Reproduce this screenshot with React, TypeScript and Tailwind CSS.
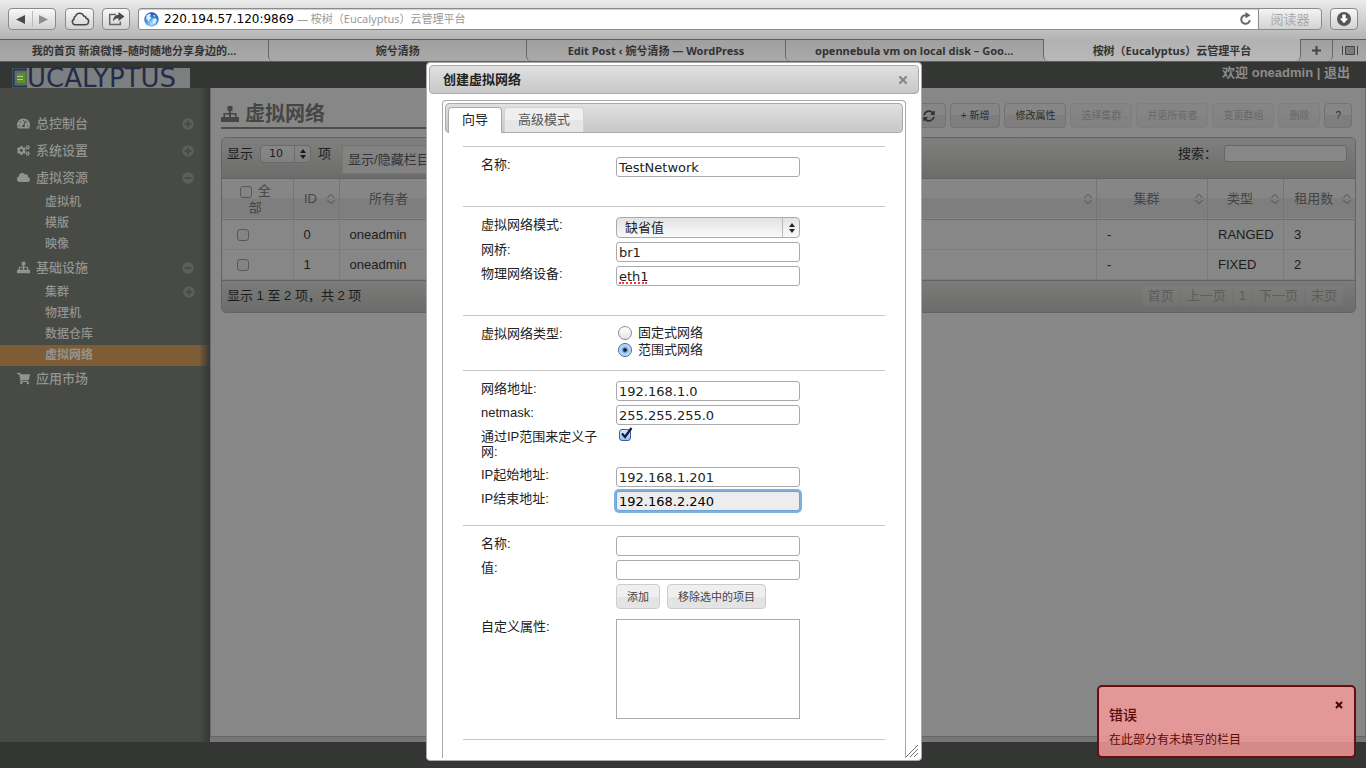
import type { ReactNode } from "react";
import { FaCloud, FaCogs, FaMinusCircle, FaPlusCircle, FaShoppingCart, FaSyncAlt, FaTachometerAlt, FaTimes } from "react-icons/fa";

const ui = "font-['Liberation_Sans','Noto_Sans_CJK_SC',sans-serif]";
const chrome = "font-['Noto_Sans','Noto_Sans_CJK_SC',sans-serif]";
const verdana = "font-['DejaVu_Sans','Noto_Sans_CJK_SC',sans-serif]";

function Sitemap({ className }: { className?: string }) {
  return (
    <svg viewBox="0 0 18 16" className={className} fill="currentColor">
      <path d="M6.500 0h5v5H10v2h5.500v4H18v5h-6v-5h2V8.500h-4V11h2v5H6v-5h2V8.500H4V11h2v5H0v-5h2.500V7H8V5H6.500z" />
    </svg>
  );
}

const navigation = [
  { label: "总控制台", icon: FaTachometerAlt, toggle: "plus", items: [] },
  { label: "系统设置", icon: FaCogs, toggle: "plus", items: [] },
  {
    label: "虚拟资源",
    icon: FaCloud,
    toggle: "minus",
    items: [{ label: "虚拟机" }, { label: "模版" }, { label: "映像" }],
  },
  {
    label: "基础设施",
    icon: Sitemap,
    toggle: "minus",
    items: [
      { label: "集群", expandable: true },
      { label: "物理机" },
      { label: "数据仓库" },
      { label: "虚拟网络", active: true },
    ],
  },
  { label: "应用市场", icon: FaShoppingCart, toggle: "", items: [] },
];

const tabs = [
  "我的首页 新浪微博–随时随地分享身边的…",
  "婉兮清扬",
  "Edit Post ‹ 婉兮清扬 — WordPress",
  "opennebula vm on local disk – Goo…",
];

const actions = [
  { label: "+ 新增", disabled: false },
  { label: "修改属性", disabled: false },
  { label: "选择集群", disabled: true },
  { label: "并更所有者", disabled: true },
  { label: "变更群组", disabled: true },
  { label: "删除", disabled: true },
  { label: "?", disabled: false },
];

const networks = [
  { id: 0, owner: "oneadmin", cluster: "-", type: "RANGED", leases: 3 },
  { id: 1, owner: "oneadmin", cluster: "-", type: "FIXED", leases: 2 },
];

const pages = ["首页", "上一页", "1", "下一页", "末页"];

function ToolButton({ label, className, children }: { label: string; className: string; children: ReactNode }) {
  return (
    <button
      aria-label={label}
      className={`flex h-[22px] items-center justify-center rounded-[4px] border border-[#8a8a8a] bg-linear-to-b from-[#f8f8f8] to-[#d2d2d2] ${className}`}
    >
      {children}
    </button>
  );
}

function BrowserBar() {
  return (
    <div className={`shrink-0 ${chrome}`}>
      <div className="flex h-[39px] items-start bg-linear-to-b from-[#ececec] to-[#b4b4b4] pt-2 pr-2 pl-2">
        <div className="flex h-[22px] w-12 shrink-0 items-center rounded-[4px] border border-[#8a8a8a] bg-linear-to-b from-[#f8f8f8] to-[#d2d2d2]">
          <button aria-label="后退" className="flex h-full flex-1 items-center justify-center">
            <svg width="9" height="9" viewBox="0 0 9 9">
              <path d="M9 0v9L0 4.500z" fill="#4a4a4a" />
            </svg>
          </button>
          <span className="h-4 w-px bg-[#bbb]" />
          <button aria-label="前进" className="flex h-full flex-1 items-center justify-center">
            <svg width="9" height="9" viewBox="0 0 9 9">
              <path d="M0 0v9l9-4.500z" fill="#8e8e8e" />
            </svg>
          </button>
        </div>
        <ToolButton label="iCloud" className="ml-[9px] w-[29px] shrink-0">
          <svg width="20" height="14" viewBox="0 0 20 14" fill="none" stroke="#474747" strokeWidth="1.500">
            <path d="M5 12.700h10.500a3.300 3.300 0 0 0 .6-6.500A2.500 2.500 0 0 0 13.700 4 4.300 4.300 0 0 0 5.600 4 3 3 0 0 0 4 7.200a2.900 2.900 0 0 0 1 5.500z" />
          </svg>
        </ToolButton>
        <ToolButton label="共享" className="ml-2 w-[28px] shrink-0">
          <svg width="17" height="14" viewBox="0 0 17 14">
            <path d="M8 2.500H1.700v10h10.600V9.500" fill="none" stroke="#666" strokeWidth="1.500" />
            <path d="M10.500 0 16.500 4.500l-6 4.500V6.300C7.500 6.300 6 7.500 5 9.700 5 5.500 7 3 10.500 2.800z" fill="#4a4a4a" />
          </svg>
        </ToolButton>
        <div className="ml-2 flex h-[22px] min-w-0 flex-1 items-center rounded-l-[3px] border border-[#8a8a8a] bg-white pl-[5px] shadow-[inset_0_1px_1px_#ccc]">
          <svg width="15" height="15" viewBox="0 0 15 15" className="shrink-0">
            <defs>
              <radialGradient id="globe" cx=".5" cy=".8" r=".8">
                <stop offset="0" stopColor="#a9e0ff" />
                <stop offset=".5" stopColor="#3f92e6" />
                <stop offset="1" stopColor="#1c48ae" />
              </radialGradient>
            </defs>
            <circle cx="7.500" cy="7.500" r="7.200" fill="url(#globe)" />
            <path d="M2.500 3.500 5 1.500l2 .8L6 4.500 7.500 6 5.500 7.500 5 10 2 6.500zM8.500 7l3-1 1.500 2-1.500 3-2 1.500-1-2.500zM9 2.500l2.500 1-1 1.500z" fill="#d5ecfb" />
          </svg>
          <input
            aria-label="地址"
            defaultValue="220.194.57.120:9869"
            className={`ml-[5px] w-[133px] shrink-0 text-[12px] text-black outline-none ${verdana}`}
          />
          <span className="flex-1 text-[11px] whitespace-nowrap text-[#999]">— 桉树（Eucalyptus）云管理平台</span>
          <button aria-label="重新载入" className="mr-[6px]">
            <svg width="13" height="14" viewBox="0 0 13 14">
              <path d="M10.800 8.200A4.300 4.300 0 1 1 7 3.200" fill="none" stroke="#666" strokeWidth="2" />
              <path d="M6.500 0v6.400L11.500 3.200z" fill="#666" />
            </svg>
          </button>
        </div>
        <button className="-ml-px h-[22px] w-16 shrink-0 rounded-r-[4px] border border-[#8a8a8a] bg-linear-to-b from-[#f4f4f4] to-[#d2d2d2] text-[13px] leading-5 text-[#aaa]">
          阅读器
        </button>
        <ToolButton label="下载" className="ml-2 w-7 shrink-0">
          <svg width="14" height="14" viewBox="0 0 14 14">
            <circle cx="7" cy="7" r="7" fill="#555" />
            <path d="M5.300 2.500h3.400V6.500h2.500L7 11.300 2.800 6.500h2.500z" fill="#fff" />
          </svg>
        </ToolButton>
      </div>

      <div className="flex h-[23px] border-t border-b border-[#5e5e5e] bg-linear-to-b from-[#a0a0a0] to-[#a9a9a9] text-[11px] font-bold text-[#333]">
        <div className="grid min-w-0 flex-1 grid-cols-[268fr_258fr_258fr_258fr_258fr]">
          {tabs.map((tab, i) => (
            <button
              key={tab}
              className={`overflow-hidden px-2 text-center leading-[21px] whitespace-nowrap ${i > 0 ? "rounded-bl-[5px] border-l border-[#666]" : ""}`}
            >
              {tab}
            </button>
          ))}
          <button className="-mt-px rounded-b-[5px] border-x border-[#666] bg-linear-to-b from-[#b2b2b2] to-[#b8b8b8] px-2 text-center leading-[21px] whitespace-nowrap">
            桉树（Eucalyptus）云管理平台
          </button>
        </div>
        <button aria-label="新建标签页" className="flex w-8 items-center justify-center rounded-br-[5px] border-r border-[#666]">
          <svg width="9" height="9" viewBox="0 0 9 9">
            <path d="M4.500 0v9M0 4.500h9" stroke="#444" strokeWidth="2" />
          </svg>
        </button>
        <button aria-label="显示所有标签页" className="flex w-[33px] items-center justify-center">
          <svg width="16" height="9" viewBox="0 0 16 9">
            <path d="M.500 0v9M15.500 0v9" stroke="#444" />
            <path d="M3.500 .500h9v8h-9z" fill="#7c7c7c" stroke="#444" />
          </svg>
        </button>
      </div>
    </div>
  );
}

function Logo() {
  return (
    <div className="flex h-5 w-[178px] items-center">
      <svg width="15" height="20" viewBox="0 0 15 20" className="shrink-0">
        <path d="M0 0h15v20H0z" fill="#5f6869" />
        <path d="M15 1.500H1.500v17H15" fill="none" stroke="#1f3a52" strokeWidth="2" />
        <path d="M5 5h8v10H5z" fill="#5c9127" />
        <path d="M5 8.500h6M5 11.500h6" stroke="#b3c792" />
      </svg>
      <span className="h-5 flex-1 bg-[#7c7f80] font-['DejaVu_Sans',sans-serif] text-[26px] leading-5 text-[#262b48]">
        UCALYPTUS
      </span>
    </div>
  );
}

function Sidebar() {
  return (
    <nav className="relative w-[210px] shrink-0 bg-[#484a46] pt-[23px] text-[#929490]">
      <ul>
        {navigation.map((group) => (
          <li key={group.label}>
            <a href="#" className="flex h-[27px] items-center pr-4 pb-[2px] pl-[17px] text-[13px]">
              <group.icon className="size-[13px]" />
              <span className="ml-[6px] flex-1 font-medium">{group.label}</span>
              {group.toggle === "plus" && <FaPlusCircle className="size-3 text-[#5c5e5a]" />}
              {group.toggle === "minus" && <FaMinusCircle className="size-3 text-[#5c5e5a]" />}
            </a>
            <ul>
              {group.items.map((item: { label: string; active?: boolean; expandable?: boolean }) => (
                <li key={item.label}>
                  <a
                    href="#"
                    className={`flex h-[21px] items-center justify-between pr-[15px] pb-[2px] pl-[45px] text-[12px] ${item.active ? "bg-[#7e5c36] font-bold" : "font-medium"}`}
                  >
                    {item.label}
                    {item.expandable && <FaPlusCircle className="size-3 text-[#5c5e5a]" />}
                  </a>
                </li>
              ))}
            </ul>
          </li>
        ))}
      </ul>
      <div className="absolute inset-y-0 right-0 w-[11px] bg-linear-to-r from-transparent to-[#353734]" />
    </nav>
  );
}

function SortIcon() {
  return (
    <svg width="8" height="12" viewBox="0 0 8 12" fill="none" stroke="#4c4c4c" className="shrink-0">
      <path d="M.500 4.800 4 1.300l3.500 3.500M.500 7.200 4 10.700l3.500-3.500" />
    </svg>
  );
}

function Th({ className, children }: { className?: string; children?: ReactNode }) {
  return (
    <th className={`border-r border-[#757575] p-0 font-normal ${className ?? ""}`}>
      <div className="flex items-center pr-1 pl-px">
        <span className="flex-1 text-center">{children}</span>
        <SortIcon />
      </div>
    </th>
  );
}

function UpDown() {
  return (
    <svg width="6" height="10" viewBox="0 0 6 10" className="pointer-events-none">
      <path d="M3 0l3 4H0zM3 10l3-4H0z" fill="currentColor" />
    </svg>
  );
}

const dimBox = "size-3 appearance-none rounded-[3px] border border-[#585858] bg-[#848484]";

function Content() {
  return (
    <main className="flex min-w-0 flex-1 flex-col border-x border-[#6c6c6c] bg-[#878787] pr-[9px] pl-[10px] text-[13px] text-[#1c1c1c]">
      <div className="flex h-[49px] items-start justify-between pt-[14px] pr-1">
        <h1 className="flex h-[27px] w-80 items-center border-b-2 border-[#4c4d4b] pb-[2px] text-[20px] font-bold text-[#454744]">
          <Sitemap className="mr-[6px] h-4 w-[18px]" />
          虚拟网络
        </h1>
        <div className="flex gap-1 pt-px">
          <button
            aria-label="刷新"
            className="flex h-[25px] w-[34px] items-center justify-center rounded-[4px] border border-[#737373] bg-linear-to-b from-[#868686] from-50% to-[#7e7e7e] to-50% text-[#333]"
          >
            <FaSyncAlt className="size-3" />
          </button>
          {actions.map((action) => (
            <button
              key={action.label}
              disabled={action.disabled}
              className="h-[25px] rounded-[4px] border border-[#737373] bg-linear-to-b from-[#868686] from-50% to-[#7e7e7e] to-50% px-[10px] text-[10px] whitespace-nowrap text-[#2c2c2c] disabled:border-[#7e7e7e] disabled:from-[#858585] disabled:to-[#828282] disabled:text-[#696969]"
            >
              {action.label}
            </button>
          ))}
        </div>
      </div>

      <div className="overflow-hidden rounded-[5px] border border-[#636363]">
        <div className="flex h-[41px] items-start border-b border-[#636363] bg-linear-to-b from-[#7f7f7f] to-[#6c6d6a] px-[5px] pt-[7px]">
          <label htmlFor="pageSize" className="leading-[18px]">
            显示
          </label>
          <div className="relative ml-[7px] flex items-center">
            <select
              id="pageSize"
              className={`h-[18px] w-[51px] appearance-none rounded-[4px] border border-[#6a6a6a] bg-linear-to-b from-[#878787] to-[#808080] pl-2 text-[11px] ${verdana}`}
            >
              <option>10</option>
            </select>
            <span className="pointer-events-none absolute right-0 flex h-4 w-[17px] items-center justify-center border-l border-[#6a6a6a]">
              <UpDown />
            </span>
          </div>
          <span className="ml-[7px] leading-[18px]">项</span>
          <button className="ml-[11px] h-[29px] border border-[#747474] bg-[#828282] px-[5px] whitespace-nowrap text-[#333]">
            显示/隐藏栏目
          </button>
          <label htmlFor="search" className="ml-auto leading-[18px]">
            搜索：
          </label>
          <input id="search" className="mr-[3px] ml-[7px] h-[17px] w-[123px] rounded-[3px] border border-[#666] bg-[#878787]" />
        </div>

        <table className="w-full table-fixed border-collapse">
          <thead>
            <tr className="h-10 border-b border-[#6e6e6e] bg-linear-to-b from-[#868686] from-50% to-[#7e7e7e] to-50% text-[#444]">
              <th className="w-[71px] border-r border-[#757575] p-0 pr-1 text-center leading-[17px] font-normal">
                <label>
                  <input type="checkbox" className={`${dimBox} mr-[6px] align-[-3px]`} />
                  全
                  <br />部
                </label>
              </th>
              <Th className="w-[46px]">ID</Th>
              <Th className="w-[110px]">所有者</Th>
              <Th />
              <Th className="w-[111px]">集群</Th>
              <Th className="w-[76px]">类型</Th>
              <Th className="w-[71px] border-r-0">租用数</Th>
            </tr>
          </thead>
          <tbody>
            {networks.map((network) => (
              <tr key={network.id} className="h-[30px] border-b border-[#7c7c7c] *:border-r *:border-[#7c7c7c] *:px-[10px] *:pt-px *:pb-0">
                <td>
                  <input type="checkbox" aria-label={`选择 ${network.id}`} className={`${dimBox} ml-[5px] block`} />
                </td>
                <td>{network.id}</td>
                <td>{network.owner}</td>
                <td />
                <td>{network.cluster}</td>
                <td>{network.type}</td>
                <td>{network.leases}</td>
              </tr>
            ))}
          </tbody>
        </table>

        <div className="flex h-8 items-center justify-between border-t border-[#636363] bg-linear-to-b from-[#7b7b7b] to-[#6c6d6a] pr-3 pl-[5px]">
          <span>显示 1 至 2 项，共 2 项</span>
          <div className="flex gap-px">
            {pages.map((page) => (
              <button key={page} disabled className="h-5 bg-white/3 px-[6px] text-[#5c5c5c]">
                {page}
              </button>
            ))}
          </div>
        </div>
      </div>
    </main>
  );
}

const field = "h-5 w-full rounded-[3px] border px-[2px] text-[13px] outline-none";
const plain = "border-[#aaa] bg-white text-[#222]";

function Section({ className, children }: { className: string; children: ReactNode }) {
  return (
    <div
      className={`grid shrink-0 grid-cols-[135px_184px] content-start items-start gap-y-1 border-t border-[#c6c6c6] px-[18px] pt-[10px] ${className}`}
    >
      {children}
    </div>
  );
}

function Field({ id, label, value, className }: { id: string; label: string; value?: string; className?: string }) {
  return (
    <>
      <label htmlFor={id}>{label}</label>
      <input id={id} defaultValue={value} spellCheck={false} className={`${field} ${verdana} ${className ?? plain}`} />
    </>
  );
}

const grayButton =
  "h-[25px] rounded-[4px] border border-[#ccc] bg-linear-to-b from-[#efefef] from-50% to-[#e4e4e4] to-50% px-[10px] pt-px text-[11px] text-[#444]";

function Dialog() {
  return (
    <div
      role="dialog"
      aria-label="创建虚拟网络"
      className="absolute top-0 bottom-[7px] left-1/2 -ml-[257px] flex w-[496px] flex-col rounded-[4px] border border-[#aaa] bg-white px-[2px] pt-[2px] pb-[2px] text-[13px] leading-[15px] text-[#222]"
    >
      <div className="flex h-[29px] shrink-0 items-center justify-between rounded-[4px] border border-[#aaa] bg-linear-to-b from-[#e0e0e0] to-[#c8c8c8] pr-[9px] pl-[13px]">
        <h2 className="font-bold">创建虚拟网络</h2>
        <button aria-label="关闭" className="text-[#888]">
          <FaTimes className="size-3" />
        </button>
      </div>

      <div className="mx-[13px] mt-[6px] flex min-h-0 flex-1 flex-col overflow-hidden rounded-t-[4px] border border-b-0 border-[#aaa] px-[2px] pt-[2px]">
        <div className="flex h-[30px] shrink-0 items-end rounded-[4px] border border-[#aaa] bg-linear-to-b from-[#e0e0e0] to-[#c8c8c8] pl-[2px]">
          <button className="-mb-px h-[26px] w-[54px] rounded-t-[4px] border border-b-0 border-[#aaa] bg-white pb-[2px]">向导</button>
          <button className="ml-[2px] h-[25px] w-20 rounded-t-[4px] border border-b-0 border-[#d3d3d3] bg-linear-to-b from-[#efefef] from-50% to-[#e6e6e6] to-50% pb-[2px] text-[#555]">
            高级模式
          </button>
        </div>

        <form className="flex flex-col px-[18px] pt-[13px]">
          <Section className="h-[60px]">
            <Field id="name" label="名称:" value="TestNetwork" />
          </Section>

          <Section className="h-[109px]">
            <label htmlFor="mode">虚拟网络模式:</label>
            <div className="relative flex items-center">
              <select
                id="mode"
                className="h-[21px] w-full appearance-none rounded-[4px] border border-[#aaa] bg-linear-to-b from-[#e2e2e2] to-[#fafafa] pl-2 text-[13px] text-[#222]"
              >
                <option>缺省值</option>
              </select>
              <span className="pointer-events-none absolute right-0 flex h-[19px] w-[18px] items-center justify-center border-l border-[#bbb]">
                <UpDown />
              </span>
            </div>
            <Field id="bridge" label="网桥:" value="br1" />
            <label htmlFor="phydev">物理网络设备:</label>
            <div className="relative">
              <input id="phydev" defaultValue="eth1" spellCheck={false} className={`${field} ${plain} ${verdana} block`} />
              <span className="pointer-events-none absolute bottom-[2px] left-[3px] w-7 border-b-2 border-dotted border-[#f33]" />
            </div>
          </Section>

          <Section className="h-[55px]">
            <span>虚拟网络类型:</span>
            <div className="-mt-[2px]">
              <label className="flex h-[17px] items-center gap-[6px]">
                <input
                  type="radio"
                  name="type"
                  className="ml-[2px] size-[14px] appearance-none rounded-full border border-[#8a8a8a] bg-linear-to-b from-[#fff] to-[#e4e4e4]"
                />
                固定式网络
              </label>
              <label className="flex h-[17px] items-center gap-[6px]">
                <input
                  type="radio"
                  name="type"
                  defaultChecked
                  className="ml-[2px] size-[14px] appearance-none rounded-full border border-[#4a5c9c] bg-[radial-gradient(circle,#111a2e_1px,#8fc4f4_3px,#c6e6ff_6px)]"
                />
                范围式网络
              </label>
            </div>
          </Section>

          <Section className="h-[155px]">
            <Field id="address" label="网络地址:" value="192.168.1.0" />
            <Field id="netmask" label="netmask:" value="255.255.255.0" />
            <label htmlFor="range" className="h-[34px] w-[120px]">
              通过IP范围来定义子网:
            </label>
            <div className="relative h-[14px]">
              <input
                id="range"
                type="checkbox"
                defaultChecked
                className="ml-[3px] block size-3 appearance-none rounded-[3px] border border-[#4a5c9c] bg-linear-to-b from-[#d3e8fb] to-[#8fc2f2]"
              />
              <svg width="13" height="13" viewBox="0 0 13 13" className="pointer-events-none absolute -top-[2px] left-[4px]">
                <path d="M2 6.500l3 3.500L11.500 1" fill="none" stroke="#10182e" strokeWidth="2.200" />
              </svg>
            </div>
            <Field id="start" label="IP起始地址:" value="192.168.1.201" />
            <Field
              id="end"
              label="IP结束地址:"
              value="192.168.2.240"
              className="border-[#6ea3d8] bg-[#ededed] text-black ring-2 ring-[#7fb0de]"
            />
          </Section>

          <Section className="h-[214px]">
            <Field id="key" label="名称:" />
            <Field id="value" label="值:" />
            <div className="col-start-2 mb-[6px] flex gap-[7px]">
              <button type="button" className={grayButton}>
                添加
              </button>
              <button type="button" className={grayButton}>
                移除选中的项目
              </button>
            </div>
            <label htmlFor="custom">自定义属性:</label>
            <textarea id="custom" className="h-[100px] w-full resize-none border border-[#aaa] bg-white" />
          </Section>
          <hr className="border-[#c6c6c6]" />
        </form>
      </div>

      <svg width="12" height="12" viewBox="0 0 12 12" className="absolute right-[3px] bottom-[3px]">
        <path d="M0 12 12 0M4 12l8-8M8 12l4-4" stroke="#777" />
      </svg>
    </div>
  );
}

function ErrorNotice() {
  return (
    <div
      role="alert"
      className="absolute right-[10px] bottom-[10px] h-[73px] w-[259px] rounded-[5px] border-2 border-[#6b0d0d] bg-[rgba(245,154,154,0.84)] pt-[18px] pl-[10px] text-[#5c0a0a]"
    >
      <h3 className="text-[14px] leading-5 font-medium">错误</h3>
      <p className="mt-[7px] text-[12px] leading-4">在此部分有未填写的栏目</p>
      <button aria-label="关闭" className="absolute top-[14px] right-[11px]">
        <svg width="8" height="8" viewBox="0 0 8 8">
          <path d="M1 1l6 6M7 1 1 7" stroke="#3c0808" strokeWidth="2" />
        </svg>
      </button>
    </div>
  );
}

export default function App() {
  return (
    <div className={`flex h-screen flex-col overflow-hidden bg-[#343633] ${ui}`}>
      <BrowserBar />
      <div className="relative flex min-h-0 flex-1 flex-col">
        <header className="flex h-[26px] shrink-0 items-center justify-between pr-4 pl-3 text-[13px] font-bold text-[#8c8c8c]">
          <div className="pt-[5px] font-normal">
            <Logo />
          </div>
          <div className="pb-1">
            欢迎 oneadmin | <a href="#">退出</a>
          </div>
        </header>
        <div className="flex min-h-0 flex-1">
          <Sidebar />
          <div className="flex min-w-0 flex-1 flex-col">
            <Content />
            <div className="h-[6px] shrink-0 border-t border-[#666] bg-[#767676]" />
          </div>
        </div>
        <footer className="h-[26px] shrink-0" />
        <Dialog />
        <ErrorNotice />
      </div>
    </div>
  );
}
